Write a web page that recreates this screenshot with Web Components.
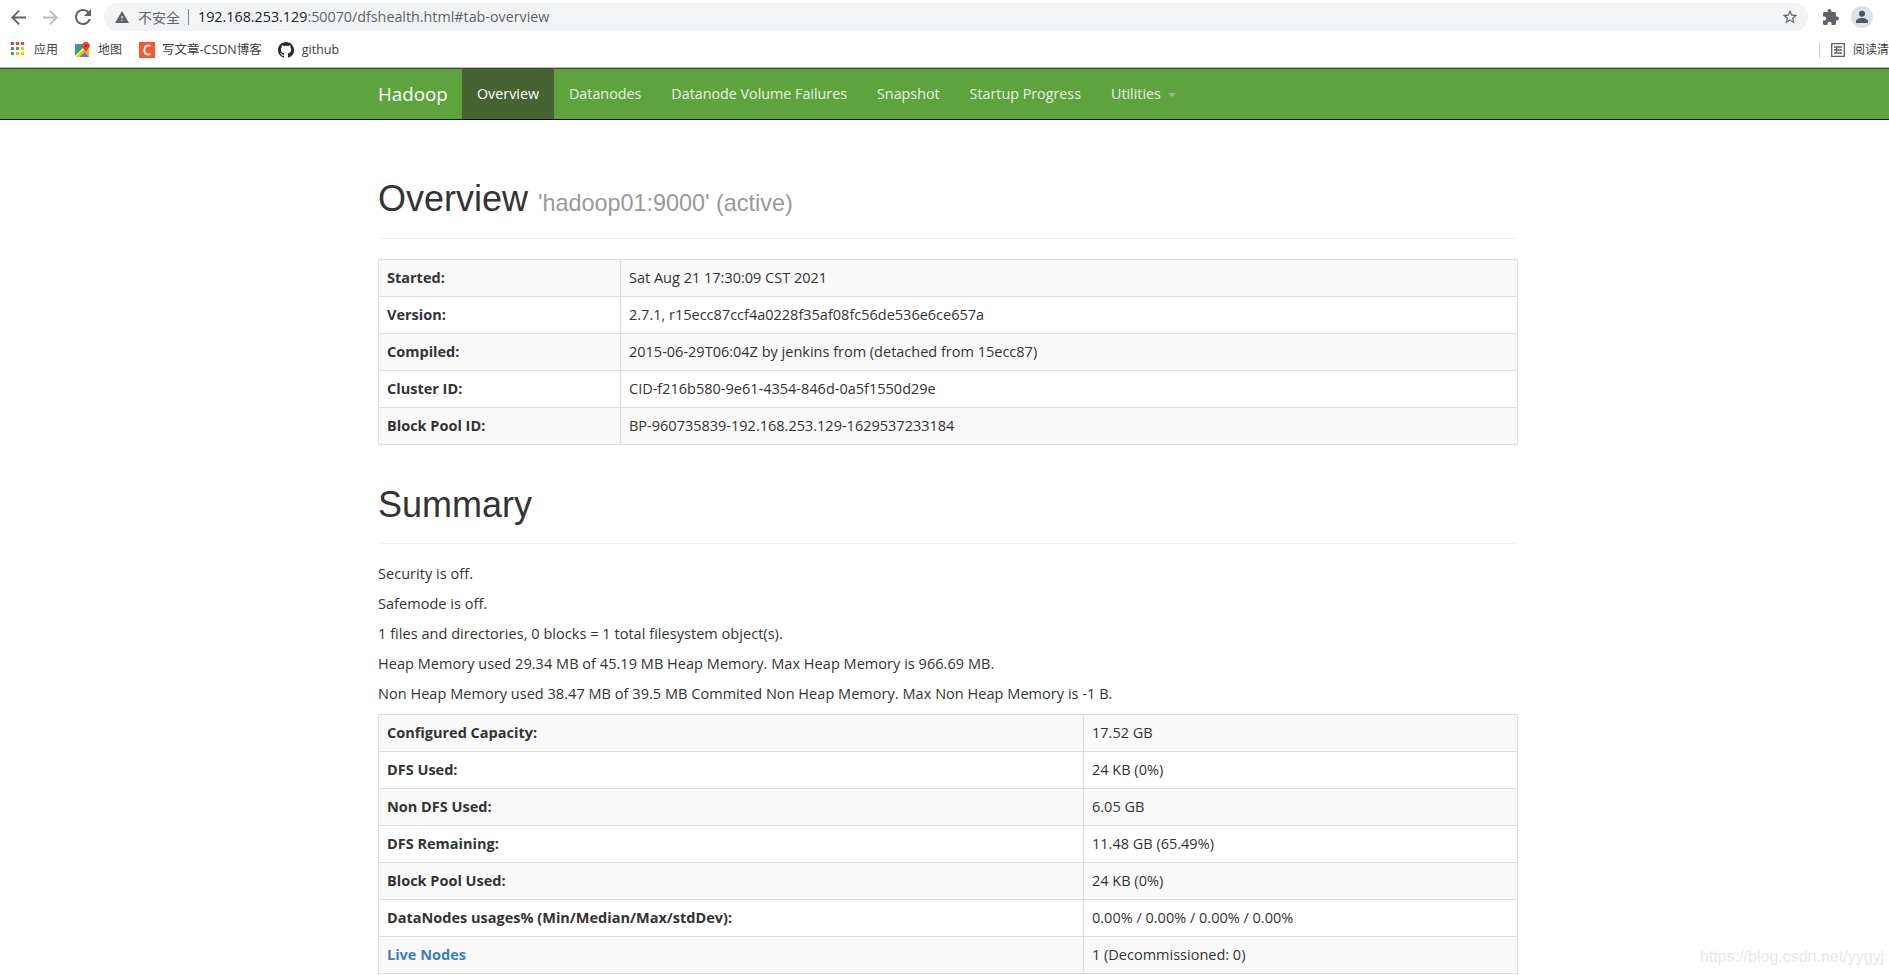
<!DOCTYPE html>
<html lang="zh"><head><meta charset="utf-8"><title>Namenode information</title>
<style>
html,body{margin:0;height:975px;overflow:hidden;background:#fff}
body{font:14.500px/20px "Open Sans","Noto Sans CJK SC",sans-serif;color:#333;display:flex;flex-direction:column}
</style></head><body>
<hdp-toolbar></hdp-toolbar>
<hdp-bookmarks></hdp-bookmarks>
<hdp-navbar></hdp-navbar>
<hdp-page>
  <hdp-header title="Overview" sub="'hadoop01:9000' (active)"></hdp-header>
  <hdp-table col="242">
    <hdp-row label="Started:">Sat Aug 21 17:30:09 CST 2021</hdp-row>
    <hdp-row label="Version:">2.7.1, r15ecc87ccf4a0228f35af08fc56de536e6ce657a</hdp-row>
    <hdp-row label="Compiled:">2015-06-29T06:04Z by jenkins from (detached from 15ecc87)</hdp-row>
    <hdp-row label="Cluster ID:">CID-f216b580-9e61-4354-846d-0a5f1550d29e</hdp-row>
    <hdp-row label="Block Pool ID:">BP-960735839-192.168.253.129-1629537233184</hdp-row>
  </hdp-table>
  <hdp-header title="Summary"></hdp-header>
  <hdp-para>Security is off.</hdp-para>
  <hdp-para>Safemode is off.</hdp-para>
  <hdp-para>1 files and directories, 0 blocks = 1 total filesystem object(s).</hdp-para>
  <hdp-para>Heap Memory used 29.34 MB of 45.19 MB Heap Memory. Max Heap Memory is 966.69 MB.</hdp-para>
  <hdp-para>Non Heap Memory used 38.47 MB of 39.5 MB Commited Non Heap Memory. Max Non Heap Memory is -1 B.</hdp-para>
  <hdp-table col="705" last>
    <hdp-row label="Configured Capacity:">17.52 GB</hdp-row>
    <hdp-row label="DFS Used:">24 KB (0%)</hdp-row>
    <hdp-row label="Non DFS Used:">6.05 GB</hdp-row>
    <hdp-row label="DFS Remaining:">11.48 GB (65.49%)</hdp-row>
    <hdp-row label="Block Pool Used:">24 KB (0%)</hdp-row>
    <hdp-row label="DataNodes usages% (Min/Median/Max/stdDev):">0.00% / 0.00% / 0.00% / 0.00%</hdp-row>
    <hdp-row label="Live Nodes" link>1 (Decommissioned: 0)</hdp-row>
    <hdp-row stub></hdp-row>
  </hdp-table>
</hdp-page>
<hdp-watermark>https://blog.csdn.net/yygyj</hdp-watermark>
<script>
const def=(name,css,html)=>customElements.define(name,class extends HTMLElement{
  connectedCallback(){ if(this.shadowRoot)return;
    const r=this.attachShadow({mode:'open'});
    r.innerHTML=`<style>${css}</style>`+(typeof html==='function'?html(this):html);
  }
});
const esc=s=>(s||'').replace(/&/g,'&amp;').replace(/</g,'&lt;');
const ui='"Open Sans","Noto Sans CJK SC",sans-serif';

def('hdp-toolbar',`
:host{display:flex;align-items:center;height:34px;flex:none;background:#fff;padding-left:11px;box-sizing:border-box}
svg{display:block;flex:none}
.pill{flex:none;width:1704px;height:28px;margin-left:13px;background:#f1f3f4;border-radius:14px;display:flex;align-items:center;box-sizing:border-box;padding-left:11px;font:14.300px/28px ${ui}}
.sec{color:#5f6368;font:14px "Noto Sans CJK SC",sans-serif;margin-left:9px}
.sep{width:1px;height:16px;background:#80868b;margin:0 9px 0 8px}
.h{color:#202124}.r{color:#5f6368}
.sp{flex:1}
.star{margin-right:10px}
.puz{margin-left:15px}
.av{width:22px;height:22px;border-radius:50%;background:#dee1e6;margin-left:12px;display:flex;align-items:center;justify-content:center}
`,`
<svg width="15" height="15" viewBox="4 4 16 16"><path fill="#5f6368" d="M20 11H7.830l5.590-5.590L12 4l-8 8 8 8 1.410-1.410L7.830 13H20v-2z"/></svg>
<svg style="margin-left:17px" width="15" height="15" viewBox="4 4 16 16"><path fill="#b9bcbf" d="M12 4l-1.410 1.410L16.170 11H4v2h12.170l-5.580 5.590L12 20l8-8z"/></svg>
<svg style="margin-left:17px" width="16" height="16" viewBox="4 4 16 16"><path fill="#5f6368" d="M17.650 6.350C16.200 4.900 14.210 4 12 4c-4.420 0-7.990 3.580-7.990 8s3.570 8 7.990 8c3.730 0 6.840-2.550 7.730-6h-2.080c-.82 2.330-3.040 4-5.650 4-3.310 0-6-2.690-6-6s2.690-6 6-6c1.660 0 3.140.69 4.220 1.780L13 11h7V4l-2.350 2.350z"/></svg>
<div class="pill">
<svg width="14" height="12" viewBox="1 2 22 19"><path fill="#5f6368" d="M1 21h22L12 2 1 21zm12-3h-2v-2h2v2zm0-4h-2v-4h2v4z"/></svg>
<span class="sec">不安全</span><span class="sep"></span>
<span class="h">192.168.253.129</span><span class="r">:50070/dfshealth.html#tab-overview</span>
<span class="sp"></span>
<svg class="star" width="16" height="16" viewBox="1 1.500 22 21"><path fill="#5f6368" d="M22 9.240l-7.190-.62L12 2 9.190 8.630 2 9.240l5.460 4.730L5.820 21 12 17.270 18.180 21l-1.630-7.030L22 9.240zM12 15.400l-3.760 2.270 1-4.280-3.320-2.880 4.380-.38L12 6.100l1.710 4.040 4.380.38-3.320 2.880 1 4.280L12 15.400z"/></svg>
</div>
<svg class="puz" width="16" height="16" viewBox="2 1 21 21"><path fill="#5f6368" d="M20.500 11H19V7c0-1.100-.9-2-2-2h-4V3.500C13 2.120 11.880 1 10.500 1S8 2.120 8 3.500V5H4c-1.100 0-1.990.9-1.990 2v3.800H3.500c1.490 0 2.700 1.210 2.700 2.700s-1.210 2.700-2.700 2.700H2V20c0 1.100.9 2 2 2h3.800v-1.500c0-1.490 1.210-2.700 2.700-2.700 1.490 0 2.700 1.210 2.700 2.700V22H17c1.100 0 2-.9 2-2v-4h1.500c1.380 0 2.500-1.120 2.500-2.500S21.880 11 20.500 11z"/></svg>
<div class="av"><svg width="14" height="14" viewBox="0 0 14 14"><circle cx="7" cy="3.800" r="3" fill="#47556b"/><path d="M1 13v-1.500C1 9.500 4 8 7 8s6 1.500 6 3.500V13z" fill="#47556b"/></svg></div>
`);

def('hdp-bookmarks',`
:host{display:flex;align-items:center;height:34px;flex:none;background:#fff;padding:0 0 2px 11px;box-sizing:border-box;font:12px/16px ${ui};color:#3c4043;overflow:hidden;white-space:nowrap}
svg{display:block;flex:none}
span{font-family:${ui}}
.end{flex:1}
.div{width:1px;height:16px;background:#c8cacd;margin-right:11px}
`,`
<svg style="margin-bottom:3px" width="13" height="13" viewBox="0 0 13 13">
<rect width="3" height="3" fill="#ea4335"/><rect x="5" width="3" height="3" fill="#ea4335"/><rect x="10" width="3" height="3" fill="#ea4335"/>
<rect y="5" width="3" height="3" fill="#4285f4"/><rect x="5" y="5" width="3" height="3" fill="#34a853"/><rect x="10" y="5" width="3" height="3" fill="#fbbc04"/>
<rect y="10" width="3" height="3" fill="#34a853"/><rect x="5" y="10" width="3" height="3" fill="#fbbc04"/><rect x="10" y="10" width="3" height="3" fill="#fbbc04"/></svg>
<span style="margin:0 17px 0 10px">应用</span>
<svg style="margin-bottom:2px" width="15" height="15" viewBox="0 0 15 15"><path d="M0 2h11v13H0z" fill="#34a853"/><path d="M0 15 11 5l3 3v7z" fill="#fbbc04"/><path d="M0 2h6L0 8z" fill="#4285f4"/><path d="M5 15l4.500-5 4.500 5z" fill="#4285f4"/><path d="M0 15 12 3" stroke="#fff" stroke-width="1.300"/><path d="M11 0a3.800 3.800 0 0 1 3.800 3.800C14.800 6.200 12 7.500 11 10.500 10 7.500 7.200 6.200 7.200 3.800A3.800 3.800 0 0 1 11 0z" fill="#ea4335"/><circle cx="11" cy="3.800" r="1.300" fill="#a52714"/></svg>
<span style="margin:0 17px 0 8px">地图</span>
<svg width="16" height="16" viewBox="0 0 16 16"><rect width="16" height="16" fill="#fc5531"/><path d="M11.500 4.200C10 2.900 5.500 3 5.300 8s4.500 5 6.200 3.800" fill="none" stroke="#fff" stroke-width="1.800"/></svg>
<span style="margin:0 16px 0 7px;font-size:12.500px">写文章-CSDN博客</span>
<svg width="16" height="16" viewBox="0 0 16 16"><path fill="#24292e" d="M8 0C3.580 0 0 3.580 0 8c0 3.540 2.290 6.530 5.470 7.590.4.070.55-.17.55-.38 0-.19-.01-.82-.01-1.490-2.010.37-2.530-.49-2.690-.94-.09-.23-.48-.94-.82-1.130-.28-.15-.68-.52-.01-.53.630-.01 1.080.58 1.230.82.720 1.210 1.870.87 2.330.66.070-.52.280-.87.510-1.070-1.780-.2-3.640-.89-3.640-3.950 0-.87.310-1.590.82-2.150-.08-.2-.36-1.020.08-2.120 0 0 .67-.21 2.200.82.640-.18 1.320-.27 2-.27s1.360.09 2 .27c1.530-1.040 2.200-.82 2.200-.82.440 1.100.16 1.920.08 2.120.51.560.82 1.270.82 2.150 0 3.070-1.870 3.750-3.650 3.950.29.25.54.73.54 1.480 0 1.070-.01 1.930-.01 2.200 0 .21.150.46.550.38A8.010 8.010 0 0 0 16 8c0-4.420-3.580-8-8-8z"/></svg>
<span style="margin-left:8px;font-size:12.500px">github</span>
<div class="end"></div>
<div class="div"></div>
<svg width="14" height="14" viewBox="0 0 14 14"><path d="M.7.7h12.600v12.600H.7zM3 4h8M3 7h8M3 10h8M5.500 3.500v7" fill="none" stroke="#5f6368" stroke-width="1.300"/></svg>
<span style="margin-left:8px;width:36px">阅读清</span>
`);

def('hdp-navbar',`
:host{display:block;flex:none;height:52px;box-sizing:border-box;background:#5fa33e;border-top:1px solid #444;border-bottom:1px solid #111;box-shadow:0 -1px 0 #bbb}
.in{display:flex;height:100%;padding-left:378px;font:14.300px/20px ${ui}}
.brand{font:18.800px/50px ${ui};color:#fff;width:84px;flex:none}
a{display:block;padding:15px 15px 0;color:#e6f2e0;text-decoration:none;white-space:nowrap;flex:none}
a.on{background:#456431;color:#fff}
i{display:inline-block;width:0;height:0;border:4px solid transparent;border-top-color:#9dbb8c;border-bottom:0;margin-left:3px;vertical-align:middle}
`,`<div class="in"><div class="brand">Hadoop</div>
<a class="on">Overview</a><a>Datanodes</a><a>Datanode Volume Failures</a><a>Snapshot</a><a>Startup Progress</a><a>Utilities <i></i></a></div>`);

def('hdp-page',`
:host{display:block;width:1140px;margin-left:378px;padding-top:19px;flex:none}
`,`<slot></slot>`);

def('hdp-header',`
:host{display:block;margin:40px 0 20px;padding-bottom:9px;border-bottom:1px solid #eee}
h1{margin:0 0 10px;font:500 36px/39.600px "Liberation Sans",Arial,sans-serif;color:#333}
small{font-size:23.400px;line-height:1;font-weight:400;color:#999}
`,el=>`<h1>${esc(el.getAttribute('title'))}${el.hasAttribute('sub')?` <small>${esc(el.getAttribute('sub'))}</small>`:''}</h1>`);

def('hdp-para',`:host{display:block;margin-bottom:10px;white-space:nowrap;letter-spacing:.04px}`,`<slot></slot>`);

def('hdp-table',`
:host{display:block;border:1px solid #ddd;border-bottom:0;box-sizing:border-box;margin-bottom:20px}
:host([last]){margin-bottom:0}
`,el=>`<style>:host{--col:${el.getAttribute('col')}px}</style><slot></slot>`);

def('hdp-row',`
:host{display:flex;height:37px;box-sizing:border-box;border-bottom:1px solid #ddd;line-height:20px;white-space:nowrap}
:host(:nth-child(odd)){background:#f9f9f9}
:host([stub]){height:1px;border-bottom:0;background:#fff}
.k{flex:none;width:var(--col);box-sizing:border-box;padding:8px;font-weight:700;border-right:1px solid #ddd}
.v{flex:1;padding:8px}
a{color:#3a7fbf;text-decoration:none}
`,el=>{
  if(el.hasAttribute('stub'))return '';
  const t=esc(el.getAttribute('label'));
  return `<div class="k">${el.hasAttribute('link')?`<a>${t}</a>`:t}</div><div class="v"><slot></slot></div>`;
});

def('hdp-watermark',`
:host{position:absolute;left:1700px;top:946px;font:16px/22px "Liberation Sans",Arial,sans-serif;color:#e8e8e8;white-space:nowrap}
`,`<slot></slot>`);
</script>
</body></html>
